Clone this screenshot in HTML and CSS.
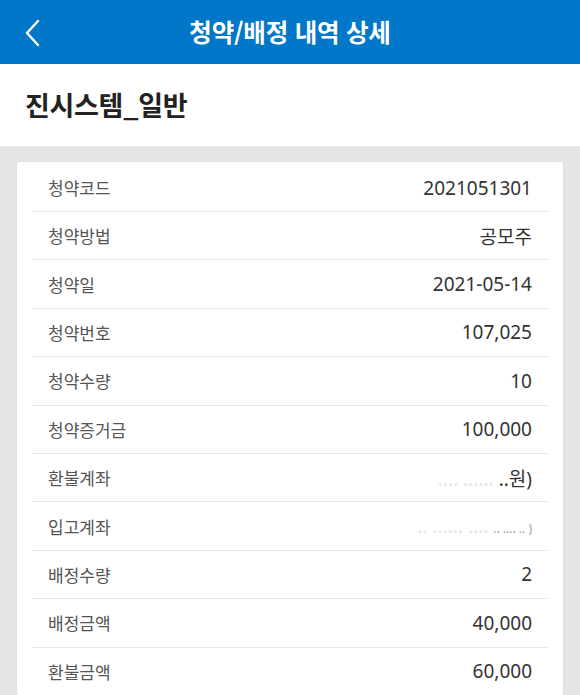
FILE: index.html
```html
<!DOCTYPE html>
<html lang="ko">
<head>
<meta charset="utf-8">
<link rel="stylesheet" href="styles.css">
</head>
<body>
<header class="topbar">
  <svg class="back" width="20" height="30" viewBox="0 0 20 30"><path d="M15 3 L4 15 L15 27" fill="none" stroke="#fff" stroke-width="2.4" stroke-linecap="round" stroke-linejoin="round"/></svg>
  <h1 class="title">청약/배정 내역 상세</h1>
</header>
<section class="name">진시스템_일반</section>
<main class="bg">
  <div class="card">
    <div class="row"><span class="label">청약코드</span><span class="value">2021051301</span></div>
    <div class="row"><span class="label">청약방법</span><span class="value">공모주</span></div>
    <div class="row"><span class="label">청약일</span><span class="value">2021-05-14</span></div>
    <div class="row"><span class="label">청약번호</span><span class="value">107,025</span></div>
    <div class="row"><span class="label">청약수량</span><span class="value">10</span></div>
    <div class="row"><span class="label">청약증거금</span><span class="value">100,000</span></div>
    <div class="row"><span class="label">환불계좌</span><span class="value"><span class="blur">‥‥ ‥‥‥</span> ..원)</span></div>
    <div class="row"><span class="label">입고계좌</span><span class="value"><span class="blur">‥ ‥‥‥ ‥‥</span> <span class="blur2">.. ‥‥ ‥ )</span></span></div>
    <div class="row"><span class="label">배정수량</span><span class="value">2</span></div>
    <div class="row"><span class="label">배정금액</span><span class="value">40,000</span></div>
    <div class="row"><span class="label">환불금액</span><span class="value">60,000</span></div>
  </div>
</main>
</body>
</html>
```
FILE: styles.css
```css
* { box-sizing: border-box; }
html, body { margin: 0; padding: 0; }
body {
  width: 580px;
  height: 695px;
  overflow: hidden;
  background: #e6e6e6;
  font-family: "Noto Sans CJK KR", "Noto Sans", sans-serif;
}
.topbar {
  height: 64px;
  background: #0077c8;
  display: flex;
  align-items: center;
  justify-content: center;
  position: relative;
}
.back { position: absolute; left: 23px; top: 18px; }
.title {
  margin: 0;
  color: #fff;
  font-size: 24.5px;
  font-weight: 700;
  letter-spacing: -0.2px;
  padding-bottom: 2px;
}
.name {
  height: 82px;
  background: #fff;
  display: flex;
  align-items: center;
  padding-left: 25px;
  padding-bottom: 2px;
  font-size: 27px;
  font-weight: 700;
  color: #222;
  letter-spacing: -0.3px;
}
.bg { padding: 16px 17px 0 17px; }
.card {
  background: #fff;
  border-radius: 3px;
  padding: 2px 15px 0 15px;
  box-shadow: 0 0 2px rgba(0,0,0,0.08);
}
.row {
  height: 48.4px;
  border-bottom: 1.5px solid #e8e8e8;
  display: flex;
  align-items: center;
  justify-content: space-between;
  padding: 0 16px 0 16px;
}
.row:first-child { height: 48px; }
.label { font-size: 17px; color: #555; }
.value {
  font-family: "Noto Sans", "Noto Sans CJK KR", sans-serif;
  font-size: 19px;
  color: #333;
}
.blur { color: #e4e4e4; }
.blur2 { color: #9a9a9a; font-size: 12px; }
```
